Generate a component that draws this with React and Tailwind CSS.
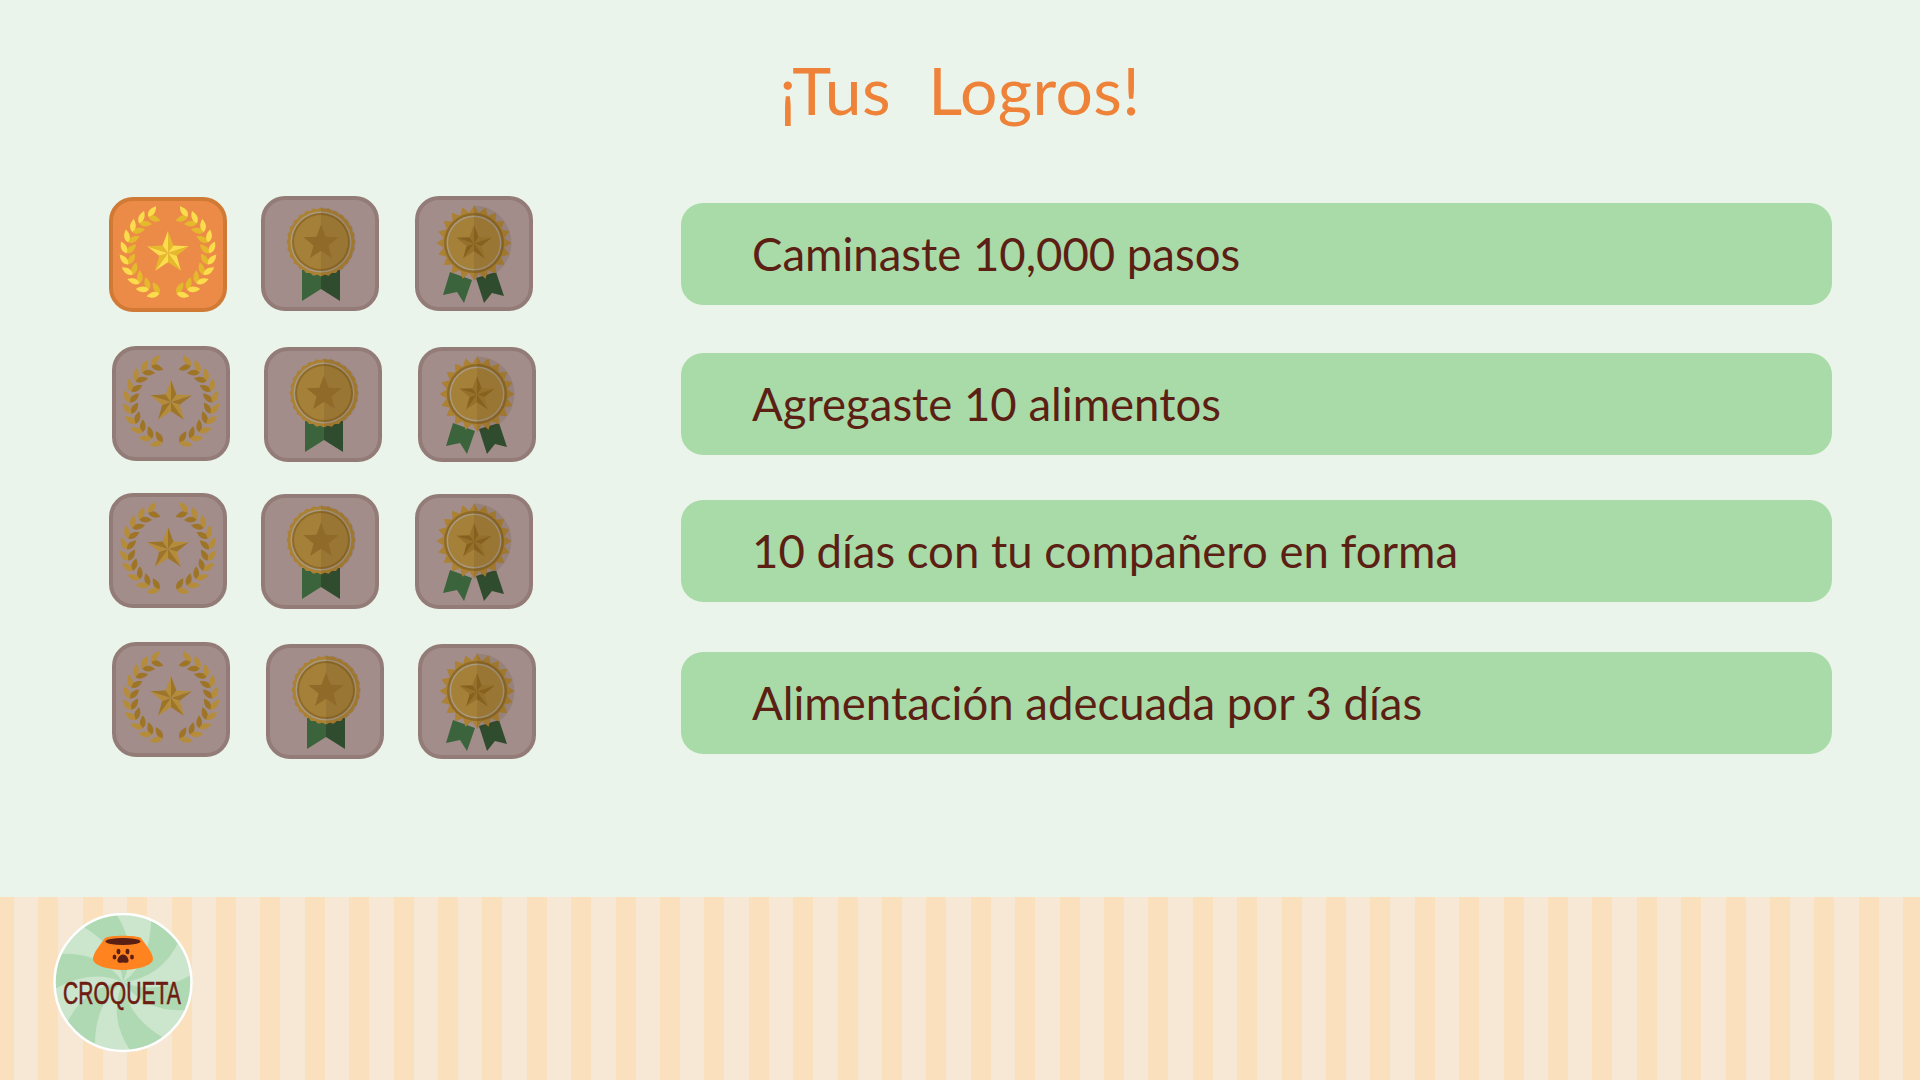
const GOLD = { bg: "bg-[#ec8a48]", border: "border-[#d17a36]", light: "#fbdc4c", dark: "#e5b92c" };
const GREY = { bg: "bg-[#a28d8a]", border: "border-[#937b77]", light: "#b58d3a", dark: "#9e7427" };

function starPoints(cx, cy, R, r) {
  const pts = [];
  for (let i = 0; i < 10; i++) {
    const rad = i % 2 === 0 ? R : r;
    const a = (-90 + i * 36) * (Math.PI / 180);
    pts.push([cx + rad * Math.cos(a), cy + rad * Math.sin(a)]);
  }
  return pts;
}

function FacetStar({ cx, cy, R, light, dark }) {
  const pts = starPoints(cx, cy, R, R * 0.42);
  return (
    <g>
      {pts.map((p, i) => {
        const next = pts[(i + 1) % 10];
        return <polygon key={i} points={`${cx},${cy} ${p[0]},${p[1]} ${next[0]},${next[1]}`} fill={i % 2 === 0 ? dark : light} />;
      })}
    </g>
  );
}

const LEAF = "M0 0C-3.8 -3 -3.8 -8 0 -13C3.8 -8 3.8 -3 0 0Z";

function Wreath({ light, dark }) {
  const leaves = [];
  for (const side of [-1, 1]) {
    for (let i = 0; i < 10; i++) {
      const deg = 12 + i * 15.5;
      const a = deg * (Math.PI / 180);
      const x = 59 + side * 41.5 * Math.sin(a);
      const y = 56 + 41.5 * Math.cos(a);
      const tangent = side * (90 - deg);
      leaves.push(
        <path key={`${side}i${i}`} d={LEAF} fill={dark} transform={`translate(${x} ${y}) rotate(${tangent - side * 48})`} />,
        <path key={`${side}o${i}`} d={LEAF} fill={light} transform={`translate(${x} ${y}) rotate(${tangent + side * 24})`} />
      );
    }
  }
  return (
    <svg viewBox="0 0 118 115" className="absolute -top-[4px] -left-[4px] h-[115px] w-[118px]">
      {leaves}
      <FacetStar cx={59} cy={56} R={22} light={light} dark={dark} />
    </svg>
  );
}

function scallop(cx, cy, R, n, depth) {
  let d = "";
  for (let i = 0; i <= n * 2; i++) {
    const a = (i / (n * 2)) * Math.PI * 2;
    const rad = i % 2 === 0 ? R : R - depth;
    d += `${i === 0 ? "M" : "L"}${cx + rad * Math.cos(a)} ${cy + rad * Math.sin(a)}`;
  }
  return d + "Z";
}

function RibbonMedal() {
  return (
    <svg viewBox="0 0 118 115" className="absolute -top-[4px] -left-[4px] h-[115px] w-[118px]">
      <polygon points="41,74 60,74 60,93 41,105" fill="#3c643c" />
      <polygon points="60,74 79,74 79,105 60,93" fill="#304c2e" />
      <path d={scallop(60, 46, 34.5, 28, 1.6)} fill="#ab8133" />
      <circle cx={60} cy={46} r={30.5} fill="#a99a82" />
      <circle cx={60} cy={46} r={29} fill="#906b27" />
      <circle cx={60} cy={46} r={27} fill="#a58039" />
      <path d="M60 11.5A34.5 34.5 0 0 1 60 80.5Z" fill="#4a2e10" fillOpacity={0.12} />
      <polygon points={starPoints(60, 47, 18.5, 7.8).map((p) => p.join(",")).join(" ")} fill="#8f6a28" />
    </svg>
  );
}

function RosetteMedal() {
  return (
    <svg viewBox="0 0 118 115" className="absolute -top-[4px] -left-[4px] h-[115px] w-[118px]">
      <polygon points="35,76 28,99 42,96 49,107 57,84" fill="#3c643c" />
      <polygon points="61,82 69,107 77,97 89,100 81,76" fill="#304c2e" />
      <path d={scallop(59, 47, 37.5, 20, 7)} fill="#ab8133" />
      <circle cx={59} cy={47} r={30} fill="#8f6a26" />
      <circle cx={59} cy={47} r={27.5} fill="#a99a82" />
      <circle cx={59} cy={47} r={26} fill="#a58039" />
      <path d="M59 9.5A37.5 37.5 0 0 1 59 84.5Z" fill="#4a2e10" fillOpacity={0.12} />
      <FacetStar cx={59} cy={47.5} R={18.5} light="#94702b" dark="#85601f" />
    </svg>
  );
}

function Badge({ theme = GREY, className = "", children }) {
  return (
    <div className={`relative h-[115px] w-[118px] shrink-0 rounded-[24px] border-[4px] ${theme.bg} ${theme.border} ${className}`}>
      {children}
    </div>
  );
}

function Logo() {
  const arms = [];
  for (let k = 0; k < 6; k++) {
    const start = (-66 + k * 60) * (Math.PI / 180);
    const end = start + (30 * Math.PI) / 180;
    const R = 69;
    const cx = 70;
    const cy = 69;
    const p = (a, r) => `${cx + r * Math.cos(a)} ${cy + r * Math.sin(a)}`;
    const twist = (30 * Math.PI) / 180;
    arms.push(
      <path
        key={k}
        fill="#afd9b3"
        d={`M${cx} ${cy}Q${p(start + twist, R * 0.5)} ${p(start, R)}A${R} ${R} 0 0 1 ${p(end, R)}Q${p(end + twist, R * 0.55)} ${cx} ${cy}Z`}
      />
    );
  }
  return (
    <svg viewBox="0 0 140 140" className="h-[140px] w-[140px] shrink-0">
      <circle cx={70} cy={69.5} r={69.5} fill="#cbe6cd" />
      {arms}
      <circle cx={70} cy={69.5} r={68.5} fill="none" stroke="#ffffff" strokeWidth={2.5} />
      <path d="M52 25C56 22 84 22 88 25C93 32 100 40 100 46C100 53 82 57 70 57C58 57 40 53 40 46C40 40 47 32 52 25Z" fill="#ff8420" />
      <ellipse cx={70} cy={28.5} rx={17.5} ry={3.4} fill="#5a1f14" />
      <g fill="#5a1f14">
        <ellipse cx={65.5} cy={38.5} rx={1.9} ry={2.8} />
        <ellipse cx={74.5} cy={38.5} rx={1.9} ry={2.8} />
        <ellipse cx={61.5} cy={44} rx={1.9} ry={2.6} />
        <ellipse cx={79} cy={44} rx={1.9} ry={2.6} />
        <path d="M70 41.5C73.5 41.5 76 45.5 75.5 48.5C74.5 50.5 72 49.5 70 49.5C68 49.5 65.5 50.5 64.5 48.5C64 45.5 66.5 41.5 70 41.5Z" />
      </g>
      <text
        transform="translate(10 90.5) scale(0.68 1)"
        fill="#6e1c12"
        stroke="#6e1c12"
        strokeWidth={0.6}
        fontSize={31}
        className="font-['Liberation_Sans',sans-serif]"
      >
        CROQUETA
      </text>
    </svg>
  );
}

const rows = [
  {
    text: "Caminaste 10,000 pasos",
    pad: "pl-[109px]",
    gaps: ["", "ml-[34px]", "ml-[36px]"],
    offsets: ["", "-mt-[1px]", "-mt-[1px]"],
    first: GOLD,
  },
  {
    text: "Agregaste 10 alimentos",
    pad: "pl-[112px]",
    gaps: ["", "ml-[34px]", "ml-[36px]"],
    offsets: ["-mt-[1px]", "", ""],
    first: GREY,
  },
  {
    text: "10 días con tu compañero en forma",
    pad: "pl-[109px]",
    gaps: ["", "ml-[34px]", "ml-[36px]"],
    offsets: ["-mt-[2px]", "mt-[1px]", "mt-[1px]"],
    first: GREY,
  },
  {
    text: "Alimentación adecuada por 3 días",
    pad: "pl-[112px]",
    gaps: ["", "ml-[36px]", "ml-[34px]"],
    offsets: ["-mt-[7px]", "-mt-[3px]", "-mt-[3px]"],
    first: GREY,
  },
];

const rowGaps = ["", "mt-[48px]", "mt-[45px]", "mt-[50px]"];

export default function App() {
  return (
    <div className="flex h-[1080px] w-[1920px] flex-col overflow-hidden bg-[#eaf4ea] font-['Lato',sans-serif]">
      <div className="h-[897px] shrink-0">
        <h1 className="pt-[46px] text-center text-[66px] leading-[88px] font-normal tracking-[0.4px] text-[#ee8239] [word-spacing:20px]">
          ¡Tus Logros!
        </h1>
        <div className="mt-[69px]">
          {rows.map((row, i) => (
            <div key={row.text} className={`flex h-[102px] items-center ${rowGaps[i]}`}>
              <div className={`flex w-[681px] shrink-0 items-center ${row.pad}`}>
                <Badge theme={row.first} className={`${row.gaps[0]} ${row.offsets[0]}`}>
                  <Wreath light={row.first.light} dark={row.first.dark} />
                </Badge>
                <Badge className={`${row.gaps[1]} ${row.offsets[1]}`}>
                  <RibbonMedal />
                </Badge>
                <Badge className={`${row.gaps[2]} ${row.offsets[2]}`}>
                  <RosetteMedal />
                </Badge>
              </div>
              <div className="flex h-[102px] w-[1151px] items-center rounded-[22px] bg-[#a9dba8] pl-[71px] text-[45.5px] text-[#5c1f14]">
                {row.text}
              </div>
            </div>
          ))}
        </div>
      </div>
      <div className="flex flex-1 items-start bg-[repeating-linear-gradient(90deg,#fbe0be_0px,#fbe0be_20px,#f6e8d5_20px,#f6e8d5_44.4px)] bg-[position:-6px_0] pt-[16px] pl-[53px]">
        <Logo />
      </div>
    </div>
  );
}
